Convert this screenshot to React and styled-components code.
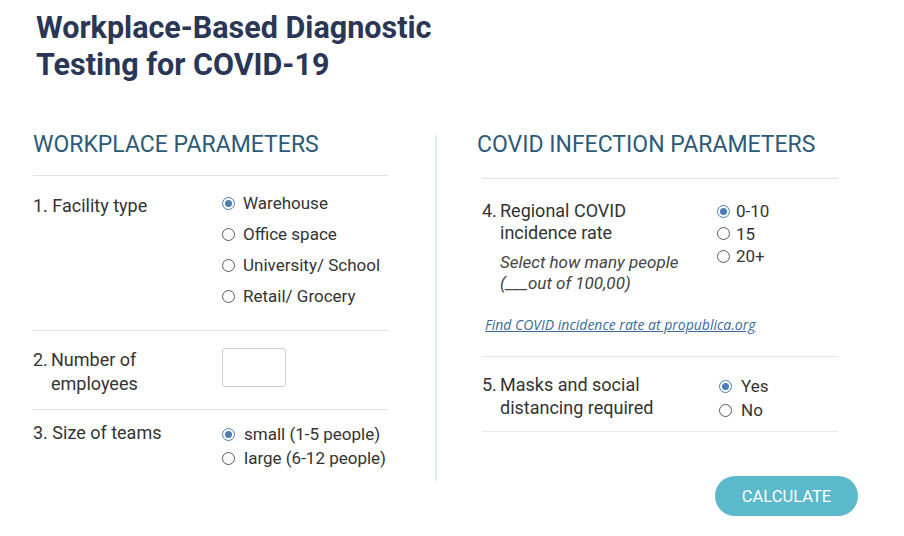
import React, { useState } from 'react';
import styled, { createGlobalStyle } from 'styled-components';

const GlobalStyle = createGlobalStyle`
  body {
    margin: 0;
    background: #ffffff;
    font-family: Roboto, 'Liberation Sans', sans-serif;
    color: #333333;
  }
`;

const Page = styled.div`
  width: 904px;
  height: 536px;
  padding: 9px 0 0 33px;
  box-sizing: border-box;
`;

const Title = styled.h1`
  margin: 0 0 0 3px;
  font-size: 30.5px;
  line-height: 37px;
  font-weight: 700;
  color: #2a3655;
`;

const Columns = styled.div`
  display: flex;
  margin-top: 47px;
`;

const Column = styled.div`
  width: ${(p) => p.width}px;
  display: flex;
  flex-direction: column;
`;

const Separator = styled.div`
  width: 2px;
  height: 346px;
  margin: 5px 40px 0 47px;
  background: #d9eef4;
`;

const Heading = styled.h2`
  margin: 0 0 ${(p) => p.gap || 15}px;
  font-size: 23px;
  line-height: 30px;
  font-weight: 400;
  color: #2c5a78;
`;

const Section = styled.div`
  margin-left: ${(p) => p.indent || 0}px;
  border-top: 1px solid #e3e3e3;
  border-bottom: ${(p) => (p.last ? '1px solid #e6e6e6' : 'none')};
  padding: ${(p) => p.pad};
`;

const Row = styled.div`
  display: flex;
`;

const Label = styled.div`
  width: ${(p) => p.width}px;
  flex-shrink: 0;
  display: flex;
  font-size: 18px;
  line-height: ${(p) => p.lh || 24}px;
  margin-top: ${(p) => p.offset || 0}px;
`;

const Num = styled.span`
  width: 18px;
  flex-shrink: 0;
`;

const Hint = styled.div`
  margin-top: 8px;
  font-style: italic;
  font-size: 17px;
  line-height: 21px;
  color: #444;
`;

const Options = styled.div`
  display: flex;
  flex-direction: column;
  margin-top: ${(p) => p.offset || 0}px;
`;

const Option = styled.label`
  display: flex;
  align-items: center;
  gap: ${(p) => p.gap || 8}px;
  font-size: 17px;
  line-height: ${(p) => p.lh || 24}px;
  cursor: pointer;
`;

const Radio = styled.input.attrs({ type: 'radio' })`
  appearance: none;
  margin: 0;
  width: 13px;
  height: 13px;
  border-radius: 50%;
  border: 1.5px solid #5a5a5a;
  box-sizing: border-box;
  display: grid;
  place-content: center;
  &:checked {
    border-color: #4b7db4;
  }
  &:checked::before {
    content: '';
    width: 7px;
    height: 7px;
    border-radius: 50%;
    background: #4b7db4;
  }
`;

const NumberBox = styled.input`
  width: 64px;
  height: 39px;
  box-sizing: border-box;
  border: 1px solid #cfcfcf;
  border-radius: 3px;
  font-size: 16px;
  padding: 0 8px;
  outline: none;
`;

const Link = styled.a`
  display: block;
  margin: 22px 0 0 3px;
  font-family: 'Open Sans', sans-serif;
  font-style: italic;
  font-size: 14px;
  line-height: 18px;
  color: #3c6a9b;
  text-decoration: underline;
`;

const Button = styled.button`
  align-self: flex-end;
  margin: 44px -20px 0 0;
  width: 143px;
  height: 40px;
  border: none;
  border-radius: 20px;
  background: #5bb9cb;
  color: #ffffff;
  font-family: Roboto, sans-serif;
  font-size: 16.5px;
  cursor: pointer;
`;

const RadioGroup = ({ name, items, value, onChange, lh, gap, offset }) => (
  <Options offset={offset}>
    {items.map((item) => (
      <Option key={item} lh={lh} gap={gap}>
        <Radio name={name} checked={value === item} onChange={() => onChange(item)} />
        {item}
      </Option>
    ))}
  </Options>
);

const App = () => {
  const [facility, setFacility] = useState('Warehouse');
  const [teams, setTeams] = useState('small (1-5 people)');
  const [rate, setRate] = useState('0-10');
  const [masks, setMasks] = useState('Yes');
  const [employees, setEmployees] = useState('');

  return (
    <Page>
      <GlobalStyle />
      <Title>
        Workplace-Based Diagnostic
        <br />
        Testing for COVID-19
      </Title>
      <Columns>
        <Column width={355}>
          <Heading>WORKPLACE PARAMETERS</Heading>
          <Section pad="12px 0 18px">
            <Row>
              <Label width={189} offset={6}>
                <span>1. Facility type</span>
              </Label>
              <RadioGroup
                name="facility"
                lh={31}
                items={['Warehouse', 'Office space', 'University/ School', 'Retail/ Grocery']}
                value={facility}
                onChange={setFacility}
              />
            </Row>
          </Section>
          <Section pad="17px 0 13px">
            <Row>
              <Label width={189}>
                <Num>2.</Num>
                <span>
                  Number of
                  <br />
                  employees
                </span>
              </Label>
              <NumberBox value={employees} onChange={(e) => setEmployees(e.target.value)} />
            </Row>
          </Section>
          <Section pad="11px 0 0">
            <Row>
              <Label width={189}>
                <span>3. Size of teams</span>
              </Label>
              <RadioGroup
                name="teams"
                gap={9}
                offset={1}
                items={['small (1-5 people)', 'large (6-12 people)']}
                value={teams}
                onChange={setTeams}
              />
            </Row>
          </Section>
        </Column>
        <Separator />
        <Column width={361}>
          <Heading gap={18}>COVID INFECTION PARAMETERS</Heading>
          <Section indent={5} pad="21px 0 22px">
            <Row>
              <Label width={235} lh={22}>
                <Num>4.</Num>
                <div>
                  <div>
                    Regional COVID
                    <br />
                    incidence rate
                  </div>
                  <Hint>
                    Select how many people
                    <br />
                    (___out of 100,00)
                  </Hint>
                </div>
              </Label>
              <RadioGroup
                name="rate"
                lh={22.5}
                gap={6}
                items={['0-10', '15', '20+']}
                value={rate}
                onChange={setRate}
              />
            </Row>
            <Link href="#">Find COVID incidence rate at propublica.org</Link>
          </Section>
          <Section indent={5} last pad="16px 0 9px">
            <Row>
              <Label width={237} lh={23}>
                <Num>5.</Num>
                <span>
                  Masks and social
                  <br />
                  distancing required
                </span>
              </Label>
              <RadioGroup
                name="masks"
                gap={9}
                offset={1}
                items={['Yes', 'No']}
                value={masks}
                onChange={setMasks}
              />
            </Row>
          </Section>
          <Button>CALCULATE</Button>
        </Column>
      </Columns>
    </Page>
  );
};

export default App;
